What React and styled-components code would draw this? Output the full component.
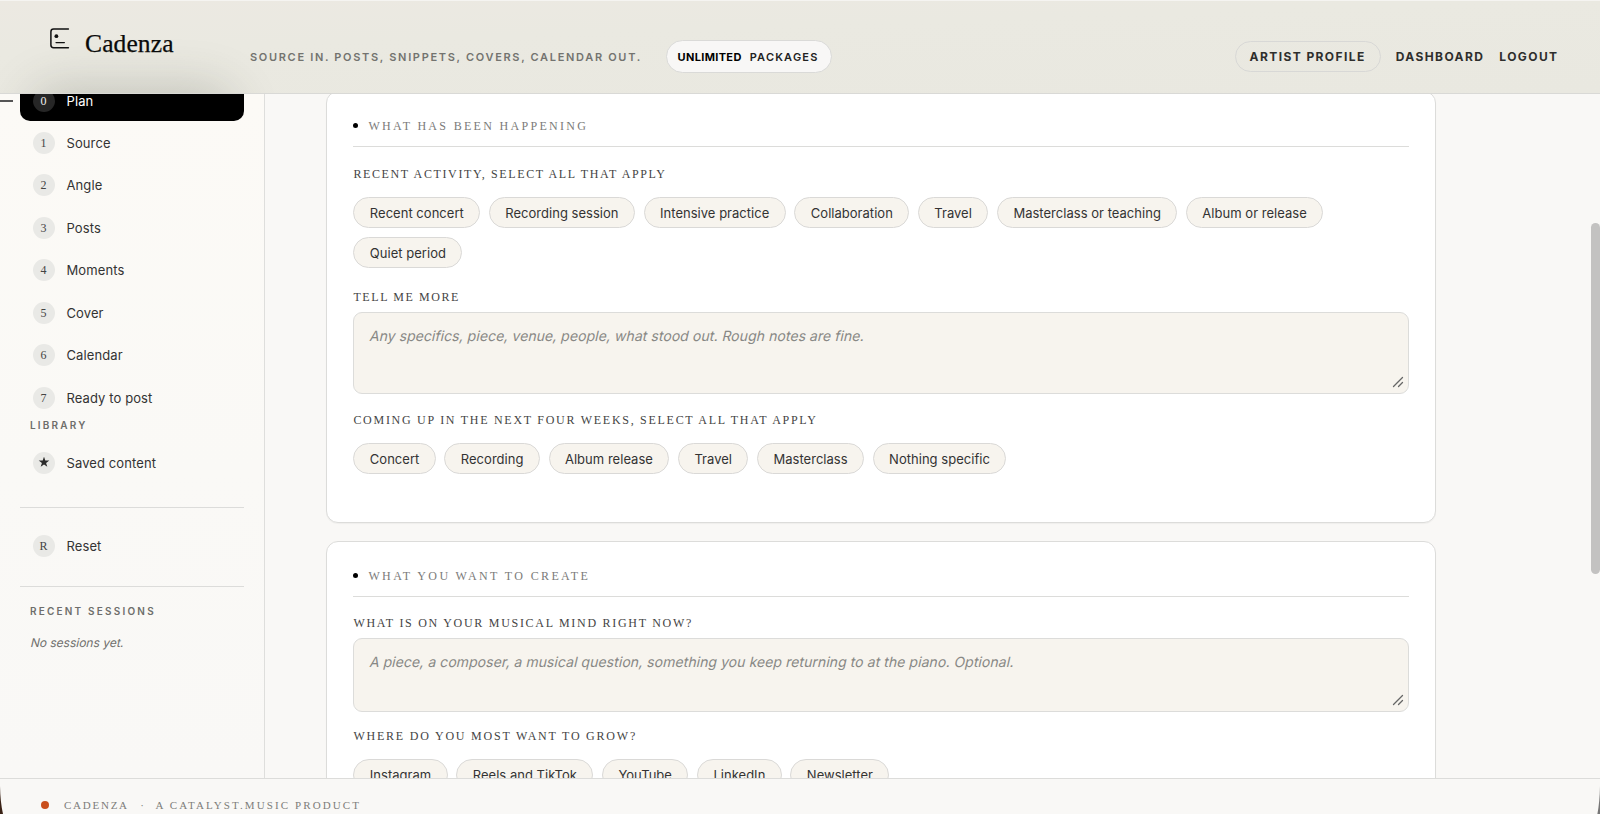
import React from 'react';
import styled, { createGlobalStyle, css } from 'styled-components';

const sans = `Inter, "Liberation Sans", sans-serif`;
const serif = `"Liberation Serif", serif`;
const line = '#dcdcda';

const Global = createGlobalStyle`
  *, *::before, *::after { box-sizing: border-box; }
  html, body { margin: 0; height: 100%; overflow: hidden; }
  body { background: #f9f8f6; color: #2b2b2b; font-family: ${sans}; }
  button { font-family: inherit; color: inherit; margin: 0; cursor: pointer; }
`;

const Shell = styled.div`
  position: relative;
  display: flex;
  flex-direction: column;
  height: 814px;
  overflow: hidden;
  background: #f9f8f6;
`;

const Header = styled.header`
  position: relative;
  flex: none;
  display: flex;
  align-items: flex-start;
  height: 93.5px;
  padding: 0 41.5px 0 50px;
  overflow: hidden;
  border-top: 1px solid #f5f4f1;
  border-bottom: 1px solid #d9d9d6;
  background: linear-gradient(178deg, #ece9e2 0%, #eae9e1 35%, #e9e8e0 100%);

  &::before {
    content: '';
    position: absolute;
    left: 48px;
    top: 104px;
    width: 168px;
    height: 30px;
    border-radius: 12px;
    box-shadow: 0 0 48px 18px rgba(60, 62, 48, 0.22);
  }
`;

const Brand = styled.div`
  position: relative;
  display: flex;
  align-items: flex-start;
  width: 200px;
  padding-top: 27px;
  gap: 15px;
`;

const BrandName = styled.span`
  margin-top: 1px;
  font: 400 25.5px/30px ${serif};
  letter-spacing: 0.12px;
  color: #0a0a0a;
  -webkit-text-stroke: 0.25px #0a0a0a;
`;

const Tagline = styled.span`
  margin-top: 46px;
  width: 415.5px;
  font-size: 11px;
  line-height: 20px;
  font-weight: 600;
  letter-spacing: 1.68px;
  color: #73736f;
  white-space: nowrap;
`;

const Quota = styled.span`
  display: flex;
  align-items: center;
  gap: 8px;
  height: 33px;
  margin-top: 39px;
  padding: 0 11px;
  width: 166px;
  border: 1px solid #dadad8;
  border-radius: 17px;
  background: #f8f7f6;
  font-size: 11px;
  font-weight: 600;
  letter-spacing: 1.2px;
  color: #222;
  white-space: nowrap;

  b {
    font-weight: 700;
    letter-spacing: 0.35px;
    color: #000;
  }
`;

const Nav = styled.nav`
  display: flex;
  align-items: center;
  gap: 15px;
  height: 31px;
  margin: 40px 0 0 auto;
`;

const NavLink = styled.a`
  font-size: 12px;
  font-weight: 700;
  line-height: 29px;
  letter-spacing: 1.41px;
  color: #2e2e2c;
  ${p => p.$pill && css`
    padding: 0 14px;
    border: 1px solid #d8d8d6;
    border-radius: 16px;
  `}
`;

const Body = styled.div`
  flex: 1;
  display: flex;
  min-height: 0;
  overflow: hidden;
`;

const Sidebar = styled.aside`
  flex: none;
  width: 265.4px;
  padding: 0 20px 0 19.5px;
  border-right: 1px solid #dededc;
  background: linear-gradient(180deg, #fcfaf6 0%, #faf9f6 55%, #f9f8f6 100%);
`;

const Steps = styled.div`
  display: flex;
  flex-direction: column;
  gap: 2.45px;
  margin-top: -13px;
`;

const SideItem = styled.div`
  position: relative;
  display: flex;
  align-items: center;
  gap: 12px;
  height: 40px;
  padding-left: 13px;
  border-radius: 10px;
  font-size: 13px;
  letter-spacing: 0.1px;
  color: #333;
  ${p => p.$active && css`
    background: #000;
    color: #fff;
    &::before {
      content: '';
      position: absolute;
      left: -20px;
      top: 19px;
      width: 13px;
      height: 2px;
      background: #555;
    }
  `}
`;

const Badge = styled.span`
  display: flex;
  align-items: center;
  justify-content: center;
  width: 22px;
  height: 22px;
  border-radius: 50%;
  background: ${p => (p.$active ? '#262626' : '#e9e9e6')};
  color: ${p => (p.$active ? '#eee' : '#444')};
  font: 400 12px/22px ${serif};
`;

const SideHeading = styled.div`
  padding-left: 10.5px;
  font-size: 10px;
  font-weight: 600;
  line-height: 14px;
  letter-spacing: 2.2px;
  color: #6e6e6b;
`;

const Library = styled.div`
  margin-bottom: 24.5px;
  ${SideHeading} { margin: 0 0 11px; }
`;

const SideSection = styled.div`
  border-top: 1px solid ${line};
  padding: ${p => p.$pad};
`;

const Slanted = styled.span`
  display: inline-block;
  white-space: nowrap;
  transform: skewX(-13deg);
  transform-origin: 0 72%;
`;

const Empty = styled.div`
  padding: 17.5px 0 0 10.5px;
  font-size: 12px;
  line-height: 16px;
  letter-spacing: 0;
  color: #70706d;
`;

const Main = styled.main`
  flex: 1;
  display: flex;
  flex-direction: column;
  gap: 17.5px;
  padding-left: 61px;
`;

const Card = styled.section`
  flex: none;
  width: 1110px;
  height: ${p => p.$h}px;
  margin-top: ${p => p.$lift || 0}px;
  padding: 21px 26px 0;
  border: 1px solid ${line};
  border-radius: 12px;
  background: #fff;
  box-shadow: 0 1px 1px rgba(0, 0, 0, 0.04);
`;

const CardTitle = styled.h2`
  display: flex;
  align-items: center;
  height: 34px;
  margin: 0;
  padding-bottom: 7px;
  border-bottom: 1px solid ${line};
  font: 400 12px/26px ${serif};
  letter-spacing: ${p => p.$track}px;
  color: #7b7b79;

  &::before {
    content: '';
    width: 5px;
    height: 5px;
    margin-right: 10px;
    border-radius: 50%;
    background: #000;
  }
`;

const Label = styled.div`
  margin-top: ${p => p.$top}px;
  font: 400 12px/16px ${serif};
  letter-spacing: ${p => p.$track}px;
  color: #444;
`;

const Chips = styled.div`
  display: flex;
  flex-wrap: wrap;
  gap: 8.6px;
  margin-top: 15px;
`;

const Chip = styled.button`
  height: 31.6px;
  padding: 0 15.45px;
  border: 1px solid #dad9d7;
  border-radius: 16px;
  background: #f7f4ee;
  font-size: 13px;
  line-height: 30px;
  letter-spacing: 0.025px;
  color: #333;
  white-space: nowrap;
`;

const Field = styled.div`
  position: relative;
  height: ${p => p.$h}px;
  margin-top: 7px;
  padding: 12px 14.5px;
  border: 1px solid ${line};
  border-radius: 9px;
  background: #f7f4ee;
  font-size: 14px;
  line-height: 22px;
  letter-spacing: ${p => p.$track}px;
  color: #888885;
`;

const Grip = styled.svg`
  position: absolute;
  right: 4px;
  bottom: 5px;
  width: 12px;
  height: 12px;
`;

const ScrollThumb = styled.div`
  position: absolute;
  z-index: 2;
  right: 0;
  top: 223px;
  width: 9px;
  height: 351px;
  border-radius: 5px;
  background: #c3c2c1;
`;

const Footer = styled.footer`
  flex: none;
  display: flex;
  align-items: flex-start;
  height: 36px;
  padding: 18px 0 0 41px;
  border-top: 1px solid ${line};
  background: #f9f8f6;
  font: 400 11px/16px ${serif};
  color: #7d7d7a;
  white-space: nowrap;
`;

const Dot = styled.span`
  width: 8px;
  height: 8px;
  margin: 4px 15px 0 0;
  border-radius: 50%;
  background: #c94f1d;
`;

const FootText = styled.span`
  margin-right: ${p => p.$gap || 0}px;
  letter-spacing: ${p => p.$track || 0}px;
`;

const Corner = styled.svg`
  position: absolute;
  bottom: 0;
  width: 4px;
  height: 28px;
  ${p => (p.$right ? 'right: 0; transform: scaleX(-1);' : 'left: 0;')}
`;

const Logo = () => (
  <svg width="20" height="22" viewBox="0 0 20 22" fill="none" stroke="#111" strokeWidth="1.5" strokeLinecap="round">
    <path d="M18.4 1H3.6Q.9 1 .9 3.7V17Q.9 19.7 3.6 19.7H18.4" />
    <path d="M6 14.6H14.4" strokeWidth="1.2" />
    <circle cx="6.4" cy="8.2" r="1.9" fill="#111" stroke="none" />
  </svg>
);

const ResizeGrip = () => (
  <Grip viewBox="0 0 12 12" stroke="#666" strokeWidth="1.3" strokeLinecap="round">
    <path d="M1.5 10.5L10.5 1.5M6.5 10.5L10.5 6.5" />
  </Grip>
);

const Star = () => (
  <svg width="12" height="12" viewBox="0 0 12 12" fill="#2b2b2b">
    <path d="M6 -.3L7.3 3.5H11.3L8.1 5.9L9.3 9.8L6 7.4L2.7 9.8L3.9 5.9L.7 3.5H4.7Z" />
  </svg>
);

const steps = ['Plan', 'Source', 'Angle', 'Posts', 'Moments', 'Cover', 'Calendar', 'Ready to post'];
const recent = ['Recent concert', 'Recording session', 'Intensive practice', 'Collaboration', 'Travel', 'Masterclass or teaching', 'Album or release', 'Quiet period'];
const upcoming = ['Concert', 'Recording', 'Album release', 'Travel', 'Masterclass', 'Nothing specific'];
const channels = ['Instagram', 'Reels and TikTok', 'YouTube', 'LinkedIn', 'Newsletter'];

const ChipList = ({ items }) => (
  <Chips>{items.map(name => <Chip key={name}>{name}</Chip>)}</Chips>
);

export default function App() {
  return (
    <Shell>
      <Global />
      <Header>
        <Brand>
          <Logo />
          <BrandName>Cadenza</BrandName>
        </Brand>
        <Tagline>SOURCE IN. POSTS, SNIPPETS, COVERS, CALENDAR OUT.</Tagline>
        <Quota><b>UNLIMITED</b>PACKAGES</Quota>
        <Nav>
          <NavLink $pill>ARTIST PROFILE</NavLink>
          <NavLink>DASHBOARD</NavLink>
          <NavLink>LOGOUT</NavLink>
        </Nav>
      </Header>
      <Body>
        <Sidebar>
          <Steps>
            {steps.map((name, i) => (
              <SideItem key={name} $active={i === 0}>
                <Badge $active={i === 0}>{i}</Badge>
                {name}
              </SideItem>
            ))}
          </Steps>
          <Library>
            <SideHeading>LIBRARY</SideHeading>
            <SideItem><Badge><Star /></Badge>Saved content</SideItem>
          </Library>
          <SideSection $pad="18px 0 20px">
            <SideItem><Badge>R</Badge>Reset</SideItem>
          </SideSection>
          <SideSection $pad="16.5px 0 0">
            <SideHeading>RECENT SESSIONS</SideHeading>
            <Empty><Slanted>No sessions yet.</Slanted></Empty>
          </SideSection>
        </Sidebar>
        <Main>
          <Card $h={432.5} $lift={-3}>
            <CardTitle $track={2.31}>WHAT HAS BEEN HAPPENING</CardTitle>
            <Label $top={19} $track={1.63}>RECENT ACTIVITY, SELECT ALL THAT APPLY</Label>
            <ChipList items={recent} />
            <Label $top={21} $track={1.59}>TELL ME MORE</Label>
            <Field $h={82} $track={0.06}>
              <Slanted>Any specifics, piece, venue, people, what stood out. Rough notes are fine.</Slanted>
              <ResizeGrip />
            </Field>
            <Label $top={17.5} $track={1.72}>COMING UP IN THE NEXT FOUR WEEKS, SELECT ALL THAT APPLY</Label>
            <ChipList items={upcoming} />
          </Card>
          <Card $h={400}>
            <CardTitle $track={2.38}>WHAT YOU WANT TO CREATE</CardTitle>
            <Label $top={18.5} $track={1.71}>WHAT IS ON YOUR MUSICAL MIND RIGHT NOW?</Label>
            <Field $h={73.5} $track={0.065}>
              <Slanted>A piece, a composer, a musical question, something you keep returning to at the piano. Optional.</Slanted>
              <ResizeGrip />
            </Field>
            <Label $top={16.5} $track={1.78}>WHERE DO YOU MOST WANT TO GROW?</Label>
            <ChipList items={channels} />
          </Card>
        </Main>
      </Body>
      <Footer>
        <Dot />
        <FootText $track={1.75} $gap={11.5}>CADENZA</FootText>
        <FootText $gap={11.5}>·</FootText>
        <FootText $track={2.1}>A CATALYST.MUSIC PRODUCT</FootText>
      </Footer>
      <ScrollThumb />
      <Corner viewBox="0 0 4 28"><path d="M0 0Q.3 16 3 28H0Z" fill="#3a2216" /></Corner>
      <Corner $right viewBox="0 0 4 28"><path d="M0 0Q.3 16 2.6 28H0Z" fill="#777" /></Corner>
    </Shell>
  );
}
